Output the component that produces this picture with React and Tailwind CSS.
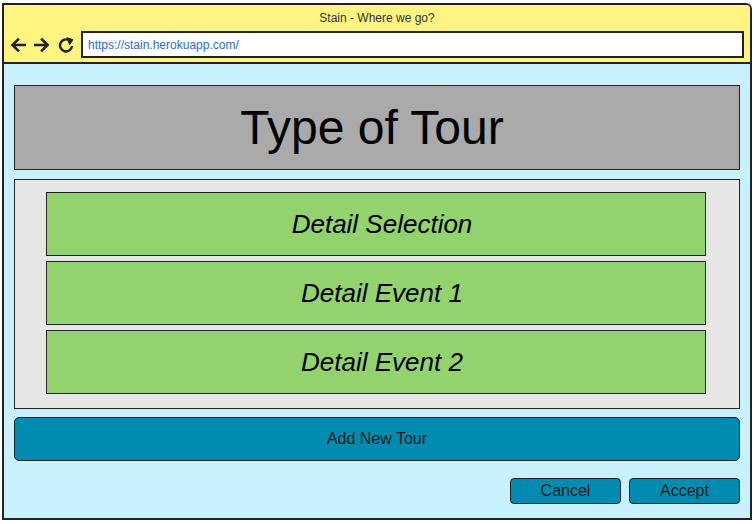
import React from 'react';

const font = { fontFamily: '"Liberation Sans", Arial, sans-serif' };

const Back = () => (
  <svg width="16" height="16" viewBox="0 0 16 16" fill="none" stroke="#222" strokeWidth="2.6" strokeLinecap="square">
    <path d="M15 8H3" />
    <path d="M8 2.5L2.5 8L8 13.5" />
  </svg>
);

const Forward = () => (
  <svg width="16" height="16" viewBox="0 0 16 16" fill="none" stroke="#222" strokeWidth="2.6" strokeLinecap="square">
    <path d="M1 8H13" />
    <path d="M8 2.5L13.5 8L8 13.5" />
  </svg>
);

const Reload = () => (
  <svg width="16" height="16" viewBox="0 0 16 16" fill="none" stroke="#222" strokeWidth="2.4">
    <path d="M14 9A6 6 0 1 1 11 3.2" />
    <path d="M9 0.8L15 2.6L11.6 7.8Z" fill="#222" strokeWidth="1" />
  </svg>
);

export default function App() {
  const details = ['Detail Selection', 'Detail Event 1', 'Detail Event 2'];

  return (
    <div className="w-[754px] h-[524px] bg-white pt-[3px] pl-[2px]" style={font}>
      <div className="w-[750px] h-[517px] border-2 border-[#222] rounded-tr-[6px] bg-[#c9f0ff] flex flex-col overflow-hidden">
        {/* browser bar */}
        <div className="h-[59px] bg-[#fff47f] border-b-2 border-[#222] flex flex-col">
          <div className="h-[26px] flex items-center justify-center text-[12px] text-[#333]">
            Stain - Where we go?
          </div>
          <div className="flex items-center pl-[6px] pr-[6px]">
            <div className="flex items-center gap-[8px] w-[71px]">
              <Back />
              <Forward />
              <Reload />
            </div>
            <div className="flex-1 h-[27px] bg-white border-2 border-[#222] flex items-center pl-[5px] text-[12px] text-[#2b6ed8]">
              https://stain.herokuapp.com/
            </div>
          </div>
        </div>

        {/* content */}
        <div className="flex-1 px-[10px] pt-[21px] flex flex-col">
          <div className="h-[85px] bg-[#aaaaaa] border border-[#222] flex items-center justify-center pr-[10px] text-[48px] text-black">
            Type of Tour
          </div>

          <div className="mt-[9px] h-[230px] bg-[#e6e6e6] border border-[#222] pt-[12px] pl-[31px] pr-[33px] flex flex-col gap-[5px]">
            {details.map((d) => (
              <div key={d} className="h-[64px] bg-[#92d36e] border border-[#222] flex items-center justify-center pl-[12px] text-[26px] italic text-black">
                {d}
              </div>
            ))}
          </div>

          <button className="mt-[8px] h-[44px] bg-[#008bb0] border border-[#222] rounded-[5px] text-[16px] text-[#1a1a1a]">
            Add New Tour
          </button>

          <div className="mt-[17px] flex justify-end gap-[8px]">
            <button className="w-[111px] h-[26px] bg-[#008bb0] border border-[#222] rounded-[4px] text-[16px] text-[#1a1a1a]">
              Cancel
            </button>
            <button className="w-[111px] h-[26px] bg-[#008bb0] border border-[#222] rounded-[4px] text-[16px] text-[#1a1a1a]">
              Accept
            </button>
          </div>
        </div>
      </div>
    </div>
  );
}
